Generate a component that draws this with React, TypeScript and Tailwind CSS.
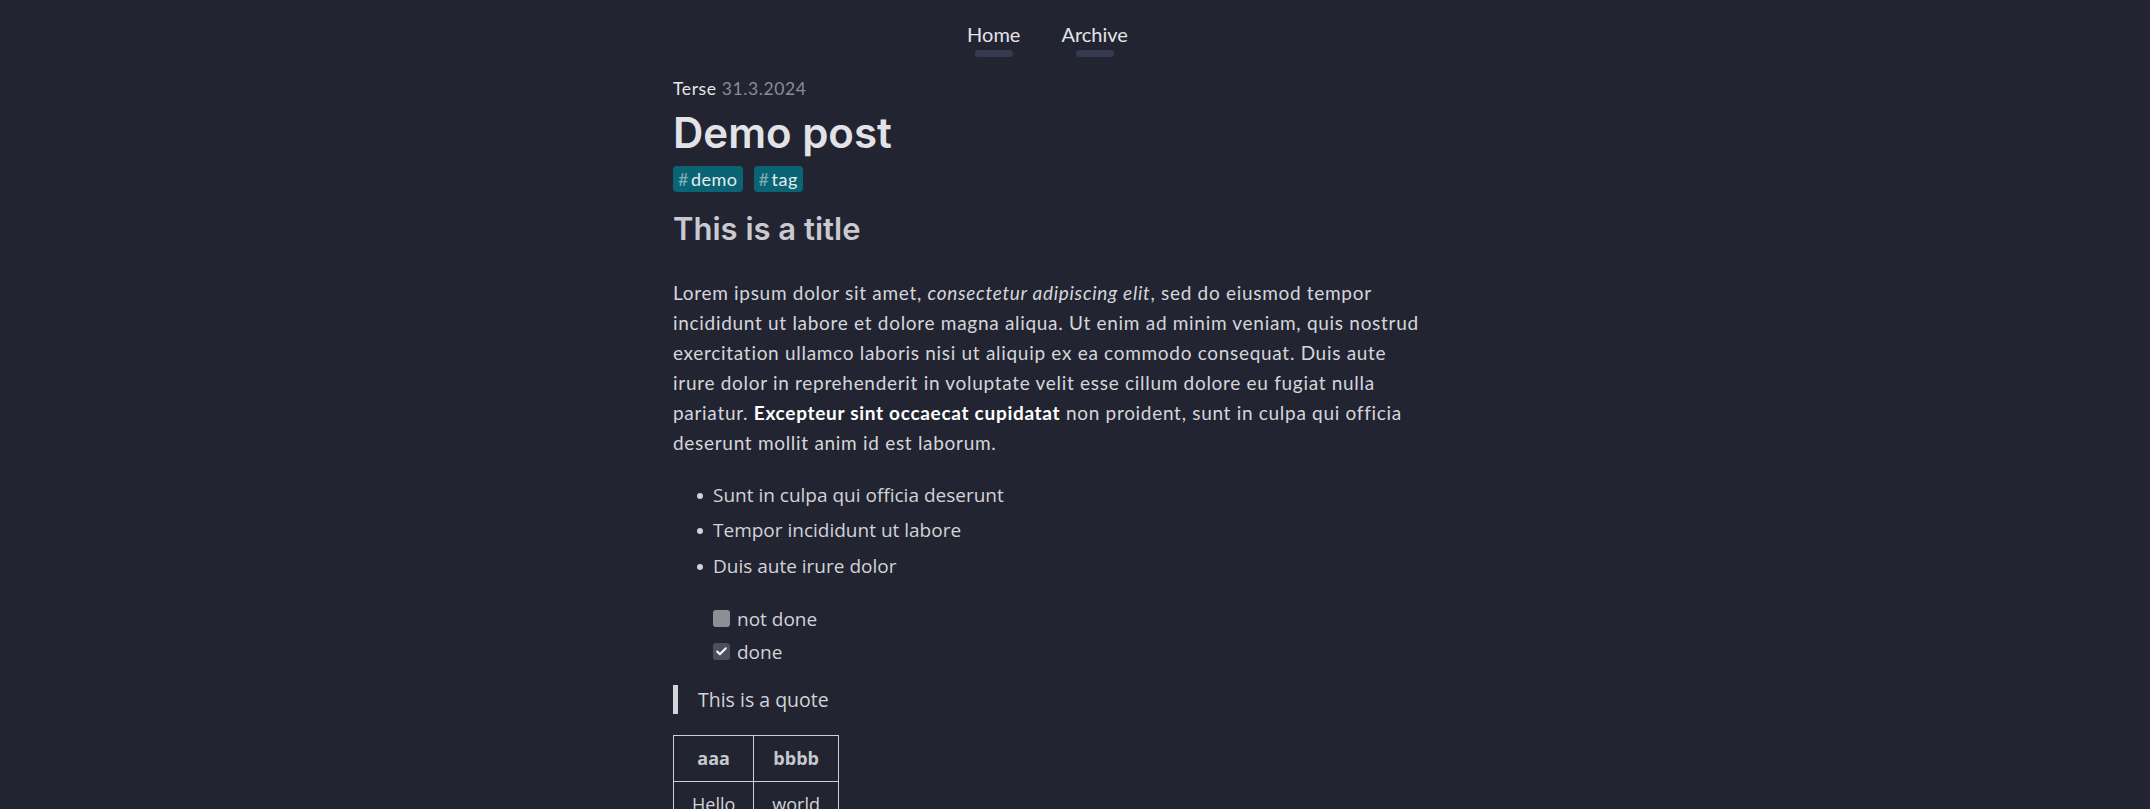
import { Check } from 'lucide-react'

const navItems = ['Home', 'Archive']
const tags = ['demo', 'tag']
const bullets = ['Sunt in culpa qui officia deserunt', 'Tempor incididunt ut labore', 'Duis aute irure dolor']
const todos = [
  { label: 'not done', done: false },
  { label: 'done', done: true },
]

function NavLink({ label }: { label: string }) {
  return (
    <a href="#" className="flex flex-col items-center text-[#e3e4e9]">
      <span>{label}</span>
      <span className="mt-[2px] h-[7px] w-[38px] rounded-full bg-[#363a50]" />
    </a>
  )
}

function Tag({ name }: { name: string }) {
  return (
    <span className="inline-flex h-[26px] items-center gap-[2px] rounded-[4px] bg-[#0b6474] px-[5px] text-[18px] font-normal tracking-[0.5px] text-[#e4ecee]">
      <span className="text-[#7fb0ba]">#</span>
      {name}
    </span>
  )
}

function Box({ done }: { done: boolean }) {
  if (!done) return <span className="mt-[6px] h-[17px] w-[17px] shrink-0 rounded-[3px] bg-[#8e8f96]" />
  return (
    <span className="mt-[6px] flex h-[17px] w-[17px] shrink-0 items-center justify-center rounded-[3px] bg-[#4d505c]">
      <Check size={13} strokeWidth={3.5} className="text-white" />
    </span>
  )
}

export default function App() {
  return (
    <div className="min-h-screen bg-[#222531] font-['Lato',sans-serif] text-[#d5d6db]">
      <nav className="flex justify-center gap-[41px] pt-[20px] pr-[55px] text-[20px] leading-[28px]">
        {navItems.map((n) => <NavLink key={n} label={n} />)}
      </nav>

      <main className="mx-auto w-[804px]">
        <div className="mt-[20px] text-[17.5px] leading-[24px] tracking-[0.6px]">
          <span className="text-[#e6e6ea]">Terse</span> <span className="text-[#8a8c97]">31.3.2024</span>
        </div>

        <h1 className="mt-[7px] font-['Inter',sans-serif] text-[42px] font-semibold leading-[50px] text-[#e3e3e7]">Demo post</h1>

        <div className="mt-[8px] flex gap-[11px]">
          {tags.map((t) => <Tag key={t} name={t} />)}
        </div>

        <h2 className="mt-[18px] font-['Inter',sans-serif] text-[31px] font-semibold leading-[38px] text-[#c9cad0]">This is a title</h2>

        <p className="mt-[30px] max-w-[760px] text-[19px] leading-[30px] tracking-[0.7px]">
          Lorem ipsum dolor sit amet, <em>consectetur adipiscing elit</em>, sed do eiusmod tempor incididunt ut labore et dolore magna aliqua. Ut enim ad minim veniam, quis nostrud exercitation ullamco laboris nisi ut aliquip ex ea commodo consequat. Duis aute irure dolor in reprehenderit in voluptate velit esse cillum dolore eu fugiat nulla pariatur. <strong className="font-bold text-white">Excepteur sint occaecat cupidatat</strong> non proident, sunt in culpa qui officia deserunt mollit anim id est laborum.
        </p>

        <div className="font-['Open_Sans',sans-serif] text-[19px] text-[#d2d3d8]">
          <ul className="mt-[21.7px] flex flex-col gap-[5.6px] pl-[24px]">
            {bullets.map((b) => (
              <li key={b} className="flex items-start gap-[10px] leading-[30px]">
                <span className="mt-[13px] h-[6px] w-[6px] shrink-0 rounded-full bg-[#d2d3d8]" />
                {b}
              </li>
            ))}
          </ul>

          <ul className="mt-[23px] flex flex-col gap-[3px] pl-[40px]">
            {todos.map((t) => (
              <li key={t.label} className="flex items-start gap-[7px] leading-[30px]">
                <Box done={t.done} />
                {t.label}
              </li>
            ))}
          </ul>

          <blockquote className="mt-[18px] border-l-[5px] border-[#d4d5dc] pl-[20px] text-[19.5px] leading-[29px]">This is a quote</blockquote>

          <table className="mt-[21px] border-collapse border border-[#d0d1d6] text-center text-[18px] leading-[25px]">
            <thead>
              <tr>
                <th className="w-[80px] border border-[#d0d1d6] px-[18px] py-[10px] font-bold text-[#c8c9ce]">aaa</th>
                <th className="w-[84px] border border-[#d0d1d6] px-[18px] py-[10px] font-bold text-[#c8c9ce]">bbbb</th>
              </tr>
            </thead>
            <tbody>
              <tr>
                <td className="border border-[#d0d1d6] px-[18px] py-[10px]">Hello</td>
                <td className="border border-[#d0d1d6] px-[18px] py-[10px]">world</td>
              </tr>
            </tbody>
          </table>
        </div>
      </main>
    </div>
  )
}
